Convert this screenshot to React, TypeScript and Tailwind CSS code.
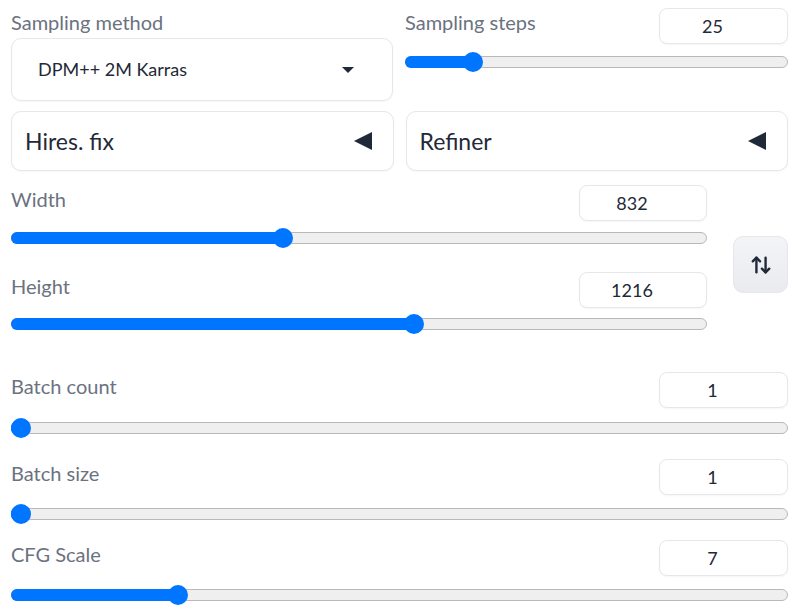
import { ArrowUpDown } from 'lucide-react'

const font = { fontFamily: 'Lato, "Noto Sans", sans-serif' }

type SliderProps = {
  label: string
  value: number
  min: number
  max: number
  inputClass?: string
  gapClass: string
}

function Slider({ value, min, max }: { value: number; min: number; max: number }) {
  const p = (value - min) / (max - min)
  const pos = `calc(10px + (100% - 20px) * ${p})`
  return (
    <div className="relative h-5 w-full">
      <div className="absolute inset-x-0 top-[4px] h-[12px] rounded-full border border-[#b9b9b9] bg-[#efefef]" />
      <div
        className="absolute left-0 top-[4px] h-[12px] rounded-full bg-[#0075ff]"
        style={{ width: pos }}
      />
      <div
        className="absolute top-0 size-5 -translate-x-1/2 rounded-full bg-[#0075ff]"
        style={{ left: pos }}
      />
    </div>
  )
}

function SliderField({ label, value, min, max, inputClass = 'w-[129px]', gapClass }: SliderProps) {
  return (
    <div className="flex flex-col">
      <div className="flex h-9 items-start justify-between">
        <span className="mt-[1px] text-[20px] leading-[26px] text-[#6b7280]">{label}</span>
        <div
          className={`flex h-9 items-center justify-center rounded-lg border border-[#e5e7eb] bg-white pr-[22px] text-[18px] text-[#1f2937] shadow-[0_1px_2px_rgba(0,0,0,0.04)] ${inputClass}`}
        >
          {value}
        </div>
      </div>
      <div className={gapClass}>
        <Slider value={value} min={min} max={max} />
      </div>
    </div>
  )
}

function Accordion({ title }: { title: string }) {
  return (
    <div className="flex h-[60px] flex-1 items-center justify-between rounded-[10px] border border-[#e5e7eb] bg-white pl-[13px] pr-[21px] shadow-[0_1px_2px_rgba(0,0,0,0.04)]">
      <span className="text-[23px] text-[#1f2937]">{title}</span>
      <span className="h-0 w-0 border-y-[9px] border-r-[18px] border-y-transparent border-r-[#1f2937]" />
    </div>
  )
}

export default function App() {
  return (
    <div className="h-[612px] w-[800px] overflow-hidden bg-white pl-[11px] pr-[12px]" style={font}>
      <div className="flex gap-3">
        <div className="flex w-[382px] flex-col">
          <span className="mt-[9px] text-[20px] leading-[26px] text-[#6b7280]">Sampling method</span>
          <div className="mt-[3px] flex h-[63px] items-center justify-between rounded-[10px] border border-[#e5e7eb] bg-white pl-[26px] pr-[38px] shadow-[0_1px_2px_rgba(0,0,0,0.04)]">
            <span className="text-[18px] text-[#1f2937]">DPM++ 2M Karras</span>
            <span className="h-0 w-0 border-x-[6px] border-t-[6px] border-x-transparent border-t-[#1f2937]" />
          </div>
        </div>
        <div className="mt-2 flex-1">
          <SliderField label="Sampling steps" value={25} min={1} max={150} gapClass="mt-2" />
        </div>
      </div>

      <div className="mt-[10px] flex gap-3">
        <Accordion title="Hires. fix" />
        <Accordion title="Refiner" />
      </div>

      <div className="mt-[14px] flex items-start">
        <div className="flex w-[696px] flex-col">
          <SliderField label="Width" value={832} min={64} max={2048} inputClass="w-[128px]" gapClass="mt-[7px]" />
          <div className="mt-6">
            <SliderField label="Height" value={1216} min={64} max={2048} inputClass="w-[128px]" gapClass="mt-[6px]" />
          </div>
        </div>
        <button className="ml-auto mt-[51px] flex h-[57px] w-[55px] items-center justify-center rounded-[10px] border border-[#e5e7eb] bg-gradient-to-b from-[#f3f4f6] to-[#e9ebef] text-[#1f2937]">
          <ArrowUpDown className="size-[22px]" strokeWidth={2.6} />
        </button>
      </div>

      <div className="mt-[38px]">
        <SliderField label="Batch count" value={1} min={1} max={100} gapClass="mt-[10px]" />
      </div>
      <div className="mt-[21px]">
        <SliderField label="Batch size" value={1} min={1} max={8} gapClass="mt-[9px]" />
      </div>
      <div className="mt-4">
        <SliderField label="CFG Scale" value={7} min={1} max={30} gapClass="mt-[9px]" />
      </div>
    </div>
  )
}
